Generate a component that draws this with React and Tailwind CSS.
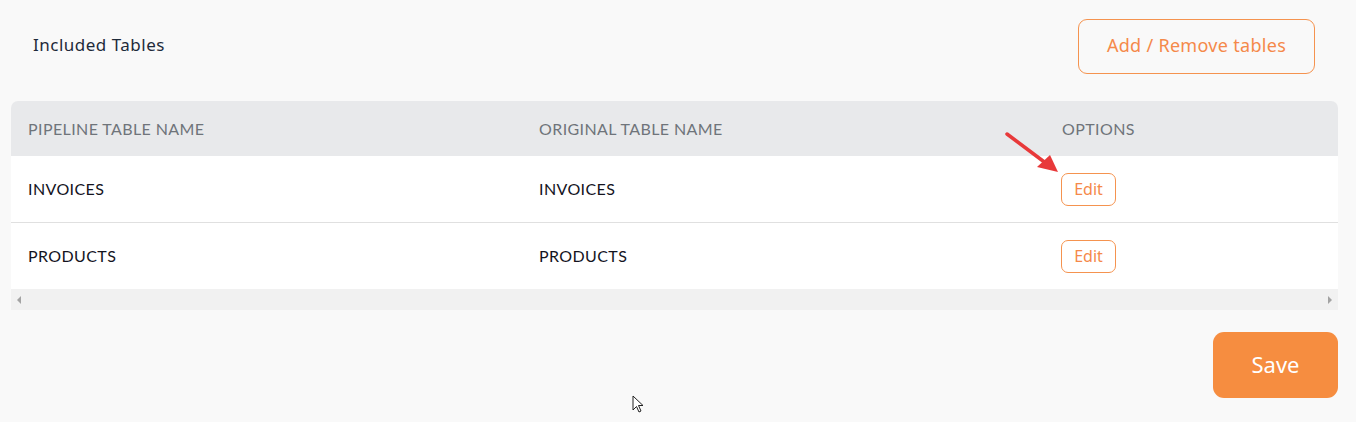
import { useState } from 'react';

const rows = [
  { pipeline: 'INVOICES', original: 'INVOICES' },
  { pipeline: 'PRODUCTS', original: 'PRODUCTS' },
];

const wide = { fontFamily: '"Noto Sans", sans-serif' };

function EditButton() {
  return (
    <button
      className="h-[33px] w-[55px] rounded-[7px] border border-[#f5934f] bg-white pb-[1px] text-[16px] text-[#f5894a]"
      style={wide}
    >
      Edit
    </button>
  );
}

export default function App() {
  const [saved, setSaved] = useState(false);

  return (
    <div
      className="relative h-[422px] w-[1356px] overflow-hidden bg-[#f9f9f9] text-[#1d1d28]"
      style={{ fontFamily: 'Lato, sans-serif' }}
    >
      {/* top bar */}
      <div className="flex items-center justify-between pl-[33px] pr-[41px] pt-[19px]" style={wide}>
        <span className="pb-[3px] text-[17px] tracking-[0.5px] text-[#1e2a3a]">Included Tables</span>
        <button className="h-[55px] w-[237px] rounded-[9px] border border-[#f5934f] pb-[3px] text-[18px] tracking-[0.3px] text-[#f5894a]">
          Add / Remove tables
        </button>
      </div>

      {/* table */}
      <div className="ml-[11px] mr-[18px] mt-[27px] overflow-hidden rounded-t-[7px] tracking-[0.4px]">
        <div className="flex h-[55px] items-center bg-[#e8e9eb] text-[16px] text-[#6f747a]">
          <div className="w-[511px] pl-[17px]">PIPELINE TABLE NAME</div>
          <div className="w-[523px] pl-[17px]">ORIGINAL TABLE NAME</div>
          <div className="pl-[17px]">OPTIONS</div>
        </div>
        {rows.map((row, i) => (
          <div
            key={row.pipeline}
            className={`flex items-center bg-white text-[16px] text-[#14141e] ${i === 0 ? 'h-[67px] border-b border-[#e0e0e0]' : 'h-[66px]'}`}
          >
            <div className="w-[511px] pl-[17px]">{row.pipeline}</div>
            <div className="w-[523px] pl-[17px]">{row.original}</div>
            <div className="pl-[16px] tracking-normal">
              <EditButton />
            </div>
          </div>
        ))}
        {/* horizontal scrollbar */}
        <div className="flex h-[21px] items-center justify-between bg-[#f1f1f1] px-[6px]">
          <span className="h-0 w-0 border-y-[4px] border-r-[4px] border-y-transparent border-r-[#a3a3a3]" />
          <span className="h-0 w-0 border-y-[4px] border-l-[4px] border-y-transparent border-l-[#a3a3a3]" />
        </div>
      </div>

      {/* footer */}
      <div className="flex justify-end pr-[18px] pt-[22px]">
        <button
          onClick={() => setSaved(!saved)}
          className="h-[66px] w-[125px] rounded-[11px] bg-[#f68d40] pb-[2px] text-[22px] text-white"
          style={wide}
        >
          Save
        </button>
      </div>

      {/* annotation arrow */}
      <svg className="absolute left-[1000px] top-[128px]" width="64" height="50" viewBox="0 0 64 50">
        <line x1="7" y1="6" x2="47" y2="36" stroke="#e8393a" strokeWidth="3.5" strokeLinecap="round" />
        <polygon points="58,44 37,39 50,27" fill="#e8393a" />
      </svg>

      {/* mouse cursor */}
      <svg className="absolute left-[632px] top-[395px]" width="14" height="20" viewBox="0 0 14 20">
        <path d="M1 1 L1 15 L4.5 11.5 L7 17 L9 16 L6.5 10.5 L11 10.5 Z" fill="white" stroke="#222" strokeWidth="1" strokeLinejoin="round" />
      </svg>
    </div>
  );
}
